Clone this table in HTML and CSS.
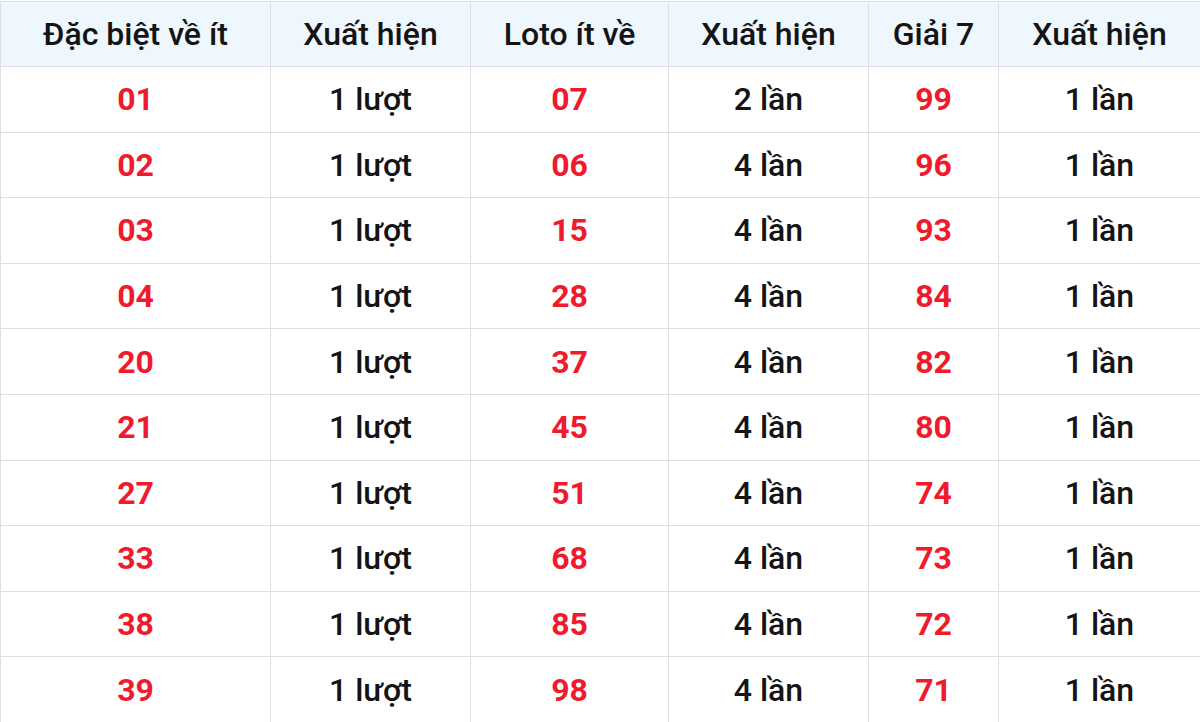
FILE: index.html
```html
<!DOCTYPE html>
<html lang="vi">
<head>
<meta charset="utf-8">
<link rel="stylesheet" href="styles.css">
</head>
<body>
<table class="stats">
  <colgroup>
    <col class="c1"><col class="c2"><col class="c3"><col class="c4"><col class="c5"><col class="c6">
  </colgroup>
  <thead>
    <tr><th>Đặc biệt về ít</th><th>Xuất hiện</th><th>Loto ít về</th><th>Xuất hiện</th><th>Giải 7</th><th>Xuất hiện</th></tr>
  </thead>
  <tbody>
    <tr><td class="num">01</td><td>1 lượt</td><td class="num">07</td><td>2 lần</td><td class="num">99</td><td>1 lần</td></tr>
    <tr><td class="num">02</td><td>1 lượt</td><td class="num">06</td><td>4 lần</td><td class="num">96</td><td>1 lần</td></tr>
    <tr><td class="num">03</td><td>1 lượt</td><td class="num">15</td><td>4 lần</td><td class="num">93</td><td>1 lần</td></tr>
    <tr><td class="num">04</td><td>1 lượt</td><td class="num">28</td><td>4 lần</td><td class="num">84</td><td>1 lần</td></tr>
    <tr><td class="num">20</td><td>1 lượt</td><td class="num">37</td><td>4 lần</td><td class="num">82</td><td>1 lần</td></tr>
    <tr><td class="num">21</td><td>1 lượt</td><td class="num">45</td><td>4 lần</td><td class="num">80</td><td>1 lần</td></tr>
    <tr><td class="num">27</td><td>1 lượt</td><td class="num">51</td><td>4 lần</td><td class="num">74</td><td>1 lần</td></tr>
    <tr><td class="num">33</td><td>1 lượt</td><td class="num">68</td><td>4 lần</td><td class="num">73</td><td>1 lần</td></tr>
    <tr><td class="num">38</td><td>1 lượt</td><td class="num">85</td><td>4 lần</td><td class="num">72</td><td>1 lần</td></tr>
    <tr><td class="num">39</td><td>1 lượt</td><td class="num">98</td><td>4 lần</td><td class="num">71</td><td>1 lần</td></tr>
  </tbody>
</table>
</body>
</html>
```
FILE: styles.css
```css
html, body {
  margin: 0;
  padding: 0;
  background: #ffffff;
}
body {
  font-family: Roboto, "Noto Sans", sans-serif;
  color: #111111;
  overflow: hidden;
}
.stats {
  width: 1200px;
  border-collapse: collapse;
  table-layout: fixed;
  margin-top: 1px;
}
.c1 { width: 270px; }
.c2 { width: 200px; }
.c3 { width: 198px; }
.c4 { width: 200px; }
.c5 { width: 130px; }
.c6 { width: 202px; }
.stats th, .stats td {
  border: 1px solid #dcdfe4;
  text-align: center;
  vertical-align: middle;
  padding: 0;
}
.stats th {
  height: 64px;
  background: #eef6fe;
  font-size: 32px;
  font-weight: 500;
  color: #141414;
}
.stats td {
  height: 64.6px;
  font-size: 32px;
  font-weight: 500;
  color: #141414;
}
.stats td.num {
  color: #ef1b2d;
  font-weight: 700;
  font-size: 32px;
}
```
